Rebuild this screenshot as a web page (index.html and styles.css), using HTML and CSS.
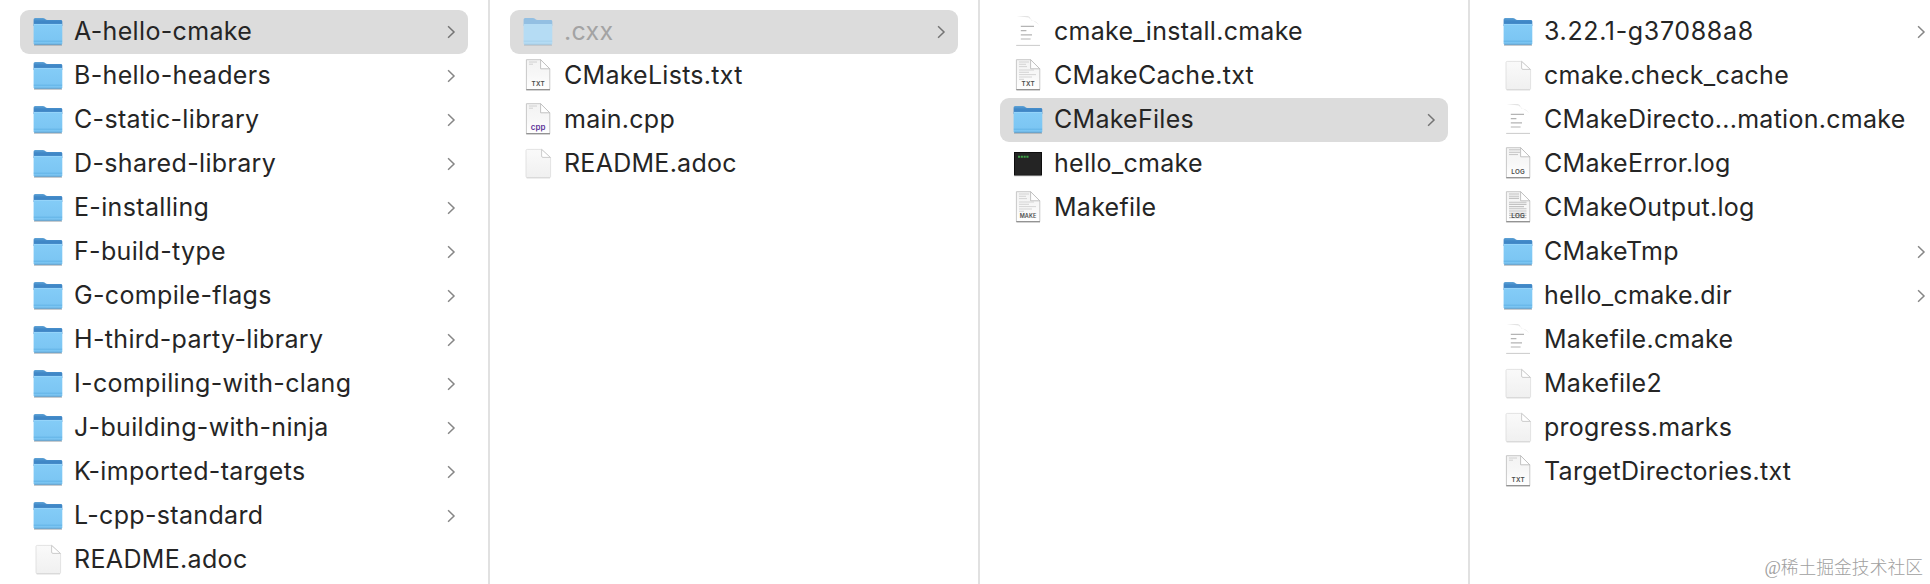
FILE: index.html
```
<!DOCTYPE html>
<html lang="en">
<head>
    <meta charset="UTF-8">
    <meta name="viewport" content="width=device-width, initial-scale=1.0">
    <title>A-hello-cmake</title>
    <link rel="stylesheet" href="styles.css">
</head>
<body>
    <!-- Icon sprite -->
    <svg class="sprite" aria-hidden="true">
        <defs>
            <linearGradient id="folderBack" x1="0" y1="0" x2="0" y2="1">
                <stop offset="0" stop-color="#5fa3d6"/>
                <stop offset="0.35" stop-color="#4189c8"/>
                <stop offset="1" stop-color="#3b82c2"/>
            </linearGradient>
            <linearGradient id="folderFront" x1="0" y1="0" x2="0" y2="1">
                <stop offset="0" stop-color="#84ccf7"/>
                <stop offset="1" stop-color="#79c4f2"/>
            </linearGradient>
            <linearGradient id="paper" x1="0" y1="0" x2="0" y2="1">
                <stop offset="0" stop-color="#f3f3f3"/>
                <stop offset="0.5" stop-color="#f7f7f7"/>
                <stop offset="1" stop-color="#ffffff"/>
            </linearGradient>
            <linearGradient id="blankPaper" x1="0" y1="0" x2="0" y2="1">
                <stop offset="0" stop-color="#fafafa"/>
                <stop offset="1" stop-color="#f0f0f0"/>
            </linearGradient>
            <symbol id="folder" viewBox="0 0 32 36">
                <path d="M2 31.2H30" stroke="#8b9299" stroke-opacity="0.6" stroke-width="1.2"/>
                <path d="M1.6 12V5.6Q1.6 4.1 3.1 4.1H10.8C13 4.1 13.4 6.1 15.6 6.1H28.8Q30.3 6.1 30.3 7.4V12Z" fill="url(#folderBack)"/>
                <path d="M1.6 11Q1.6 10 2.6 10H29.3Q30.3 10 30.3 11V29.3Q30.3 30.6 29 30.6H2.9Q1.6 30.6 1.6 29.3Z" fill="url(#folderFront)"/>
                <path d="M2 10.4H30" stroke="#9ad8fb" stroke-width="0.8"/>
                <path d="M1.8 27.2H30.1" stroke="#5eaee2" stroke-width="0.8"/>
                <path d="M2.2 30.3H29.7" stroke="#5797c5" stroke-width="0.9"/>
            </symbol>
            <symbol id="folderHidden" viewBox="0 0 32 36">
                <path d="M2 31.2H30" stroke="#bcc0c4" stroke-width="1"/>
                <path d="M1.6 12V5.6Q1.6 4.1 3.1 4.1H10.8C13 4.1 13.4 6.1 15.6 6.1H28.8Q30.3 6.1 30.3 7.4V12Z" fill="#93bfe2"/>
                <path d="M1.6 11Q1.6 10 2.6 10H29.3Q30.3 10 30.3 11V29.3Q30.3 30.6 29 30.6H2.9Q1.6 30.6 1.6 29.3Z" fill="#b5dcf4"/>
                <path d="M1.8 27.2H30.1" stroke="#a3cfeb" stroke-width="0.8"/>
                <path d="M2.2 30.3H29.7" stroke="#9cc0d9" stroke-width="0.8"/>
            </symbol>
            <symbol id="blank" viewBox="0 0 32 36">
                <path d="M5.2 3.4H19.6L28.6 11.6V30.4Q28.6 31.6 27.4 31.6H5.2Q4 31.6 4 30.4V4.6Q4 3.4 5.2 3.4Z" fill="url(#blankPaper)" stroke="#dcdcdc" stroke-width="0.8"/>
                <path d="M4.6 31.9H28" stroke="#cfcfcf" stroke-width="0.8"/>
                <path d="M19.6 3.4V10Q19.6 11.4 21 11.4H28.4Z" fill="#fff" stroke="#c6c6c6" stroke-width="0.9"/>
            </symbol>
            <symbol id="script" viewBox="0 0 32 36">
                <path d="M4.5 2H15.5C18 2.3 18.5 4 18.9 6.2C23 6.6 26 8.6 27.6 12C25 8 20 7 16.5 3.6Z" fill="#e4e4e4"/>
                <path d="M8.8 12.4H22M8.8 16.6H14.4M8.8 20.8H20M8.8 25H18.6" stroke="#b4b4b4" stroke-width="1.2"/>
                <path d="M4.2 31.4H28" stroke="#c4c4c4" stroke-width="0.9"/>
            </symbol>
            <symbol id="doc" viewBox="0 0 32 36">
                <path d="M4.4 1.7H18.6L27.8 10.8V31.5H4.4Z" fill="url(#paper)" stroke="#c2c2c2" stroke-width="0.9"/>
                <path d="M4.2 31.8H28" stroke="#828282" stroke-width="1.1"/>
                <path d="M18.6 1.7V10.8H27.8Z" fill="#fff" stroke="#bcbcbc" stroke-width="0.9"/>
            </symbol>
            <symbol id="linesShort" viewBox="0 0 32 36">
                <path d="M7 4H15M7 6.2H11" stroke="#cdcdcd" stroke-width="0.9"/>
            </symbol>
            <symbol id="linesTop" viewBox="0 0 32 36">
                <path d="M7 3.8H18M7 6.3H18M7 8.6H16" stroke="#c4c4c4" stroke-width="1"/>
            </symbol>
            <symbol id="linesFull" viewBox="0 0 32 36">
                <path d="M7 4H17M7 6.3H14M7 8.6H15M7 12H22M7 14.3H17M7 16.6H24M7 19H20M7 21.3H12" stroke="#d0d0d0" stroke-width="0.9"/>
            </symbol>
            <symbol id="linesDense" viewBox="0 0 32 36">
                <path d="M7 4H17M7 6.2H17M7 8.4H17M7 12.2H24.5M7 14.4H24.5M7 16.6H22M7 18.8H24.5M7 21H24.5M7 23.2H24.5M7 25.4H24.5M7 27.6H24.5" stroke="#c2c2c2" stroke-width="1.1"/>
            </symbol>
            <symbol id="terminal" viewBox="0 0 32 36">
                <path d="M2.2 29.6H29.8" stroke="#999" stroke-width="1.2"/>
                <rect x="2.5" y="6.5" width="27" height="22.3" fill="#242424" stroke="#0d0d0d"/>
                <path d="M6 10.7H16.6" stroke="#3fa047" stroke-width="2" stroke-dasharray="2.1 0.7"/>
            </symbol>
            <symbol id="chevron" viewBox="0 0 10 14">
                <path d="M2.1 1.2L8 7L2.1 12.8" fill="none" stroke="currentColor" stroke-width="1.5"/>
            </symbol>
        </defs>
    </svg>

    <main class="browser">
        <ul class="column column-root">
            <li class="row selected"><svg class="icon"><use href="#folder"/></svg><span class="name">A-hello-cmake</span><svg class="chevron"><use href="#chevron"/></svg></li>
            <li class="row"><svg class="icon"><use href="#folder"/></svg><span class="name">B-hello-headers</span><svg class="chevron"><use href="#chevron"/></svg></li>
            <li class="row"><svg class="icon"><use href="#folder"/></svg><span class="name">C-static-library</span><svg class="chevron"><use href="#chevron"/></svg></li>
            <li class="row"><svg class="icon"><use href="#folder"/></svg><span class="name">D-shared-library</span><svg class="chevron"><use href="#chevron"/></svg></li>
            <li class="row"><svg class="icon"><use href="#folder"/></svg><span class="name">E-installing</span><svg class="chevron"><use href="#chevron"/></svg></li>
            <li class="row"><svg class="icon"><use href="#folder"/></svg><span class="name">F-build-type</span><svg class="chevron"><use href="#chevron"/></svg></li>
            <li class="row"><svg class="icon"><use href="#folder"/></svg><span class="name">G-compile-flags</span><svg class="chevron"><use href="#chevron"/></svg></li>
            <li class="row"><svg class="icon"><use href="#folder"/></svg><span class="name">H-third-party-library</span><svg class="chevron"><use href="#chevron"/></svg></li>
            <li class="row"><svg class="icon"><use href="#folder"/></svg><span class="name">I-compiling-with-clang</span><svg class="chevron"><use href="#chevron"/></svg></li>
            <li class="row"><svg class="icon"><use href="#folder"/></svg><span class="name">J-building-with-ninja</span><svg class="chevron"><use href="#chevron"/></svg></li>
            <li class="row"><svg class="icon"><use href="#folder"/></svg><span class="name">K-imported-targets</span><svg class="chevron"><use href="#chevron"/></svg></li>
            <li class="row"><svg class="icon"><use href="#folder"/></svg><span class="name">L-cpp-standard</span><svg class="chevron"><use href="#chevron"/></svg></li>
            <li class="row"><svg class="icon"><use href="#blank"/></svg><span class="name">README.adoc</span></li>
        </ul>

        <ul class="column">
            <li class="row selected hidden-file"><svg class="icon"><use href="#folderHidden"/></svg><span class="name">.cxx</span><svg class="chevron"><use href="#chevron"/></svg></li>
            <li class="row"><svg class="icon"><use href="#doc"/><use href="#linesShort"/><text class="ext" x="16.2" y="28">TXT</text></svg><span class="name">CMakeLists.txt</span></li>
            <li class="row"><svg class="icon"><use href="#doc"/><use href="#linesShort"/><text class="ext ext-cpp" x="16.2" y="27.5">cpp</text></svg><span class="name">main.cpp</span></li>
            <li class="row"><svg class="icon"><use href="#blank"/></svg><span class="name">README.adoc</span></li>
        </ul>

        <ul class="column">
            <li class="row"><svg class="icon"><use href="#script"/></svg><span class="name">cmake_install.cmake</span></li>
            <li class="row"><svg class="icon"><use href="#doc"/><use href="#linesFull"/><text class="ext" x="16.2" y="28">TXT</text></svg><span class="name">CMakeCache.txt</span></li>
            <li class="row selected"><svg class="icon"><use href="#folder"/></svg><span class="name">CMakeFiles</span><svg class="chevron"><use href="#chevron"/></svg></li>
            <li class="row"><svg class="icon"><use href="#terminal"/></svg><span class="name">hello_cmake</span></li>
            <li class="row"><svg class="icon"><use href="#doc"/><use href="#linesFull"/><text class="ext ext-make" x="16" y="28">MAKE</text></svg><span class="name">Makefile</span></li>
        </ul>

        <ul class="column">
            <li class="row"><svg class="icon"><use href="#folder"/></svg><span class="name name-version">3.22.1-g37088a8</span><svg class="chevron"><use href="#chevron"/></svg></li>
            <li class="row"><svg class="icon"><use href="#blank"/></svg><span class="name">cmake.check_cache</span></li>
            <li class="row"><svg class="icon"><use href="#script"/></svg><span class="name">CMakeDirecto...mation.cmake</span></li>
            <li class="row"><svg class="icon"><use href="#doc"/><use href="#linesTop"/><text class="ext" x="16.2" y="28">LOG</text></svg><span class="name">CMakeError.log</span></li>
            <li class="row"><svg class="icon"><use href="#doc"/><use href="#linesDense"/><text class="ext" x="16.2" y="28">LOG</text></svg><span class="name">CMakeOutput.log</span></li>
            <li class="row"><svg class="icon"><use href="#folder"/></svg><span class="name">CMakeTmp</span><svg class="chevron"><use href="#chevron"/></svg></li>
            <li class="row"><svg class="icon"><use href="#folder"/></svg><span class="name">hello_cmake.dir</span><svg class="chevron"><use href="#chevron"/></svg></li>
            <li class="row"><svg class="icon"><use href="#script"/></svg><span class="name">Makefile.cmake</span></li>
            <li class="row"><svg class="icon"><use href="#blank"/></svg><span class="name">Makefile2</span></li>
            <li class="row"><svg class="icon"><use href="#blank"/></svg><span class="name">progress.marks</span></li>
            <li class="row"><svg class="icon"><use href="#doc"/><use href="#linesShort"/><text class="ext" x="16.2" y="28">TXT</text></svg><span class="name">TargetDirectories.txt</span></li>
        </ul>
    </main>

    <div class="watermark">@稀土掘金技术社区</div>
</body>
</html>
```

FILE: styles.css
```
* {
    box-sizing: border-box;
}
body {
    margin: 0;
    height: 584px;
    overflow: hidden;
    background-color: #fff;
    color: #252525;
    font-family: Inter, "Liberation Sans", sans-serif;
    font-size: 25px;
}
.sprite {
    display: block;
    width: 0;
    height: 0;
}
.browser {
    display: flex;
    height: 584px;
    overflow: hidden;
}
.column {
    flex: 0 0 490px;
    margin: 0;
    padding: 10px 20px 0;
    list-style: none;
    border-right: 2px solid #e1e1e1;
}
.column:last-child {
    border-right: none;
}
.row {
    display: flex;
    align-items: center;
    width: 448px;
    height: 44px;
    padding: 0 12px;
    border-radius: 9px;
}
.row.selected {
    background-color: #dcdcdc;
}
.icon {
    flex: none;
    width: 32px;
    height: 36px;
    margin-right: 10px;
}
.name {
    height: 44px;
    line-height: 42px;
    letter-spacing: 0.27px;
    white-space: nowrap;
}
.column-root .name {
    letter-spacing: 0.34px;
}
.name-version {
    letter-spacing: 0.65px;
}
.chevron {
    flex: none;
    width: 10px;
    height: 14px;
    margin-left: auto;
    margin-top: -1px;
    color: #868686;
}
.selected .chevron {
    color: #747474;
}
.hidden-file .name {
    color: #a3a3a3;
}
.ext {
    font-size: 6.3px;
    font-weight: 600;
    letter-spacing: 0.3px;
    text-anchor: middle;
    fill: #4a4a4a;
}
.ext-cpp {
    font-size: 8px;
    letter-spacing: 0;
    fill: #5f3598;
}
.ext-make {
    font-size: 5.5px;
    letter-spacing: 0.1px;
}
.watermark {
    position: absolute;
    right: 7px;
    bottom: 4px;
    color: #a0a0a0;
    font-family: "Liberation Serif", "Noto Sans CJK SC", serif;
    font-size: 17.8px;
    font-weight: 300;
    line-height: 24px;
}
```
